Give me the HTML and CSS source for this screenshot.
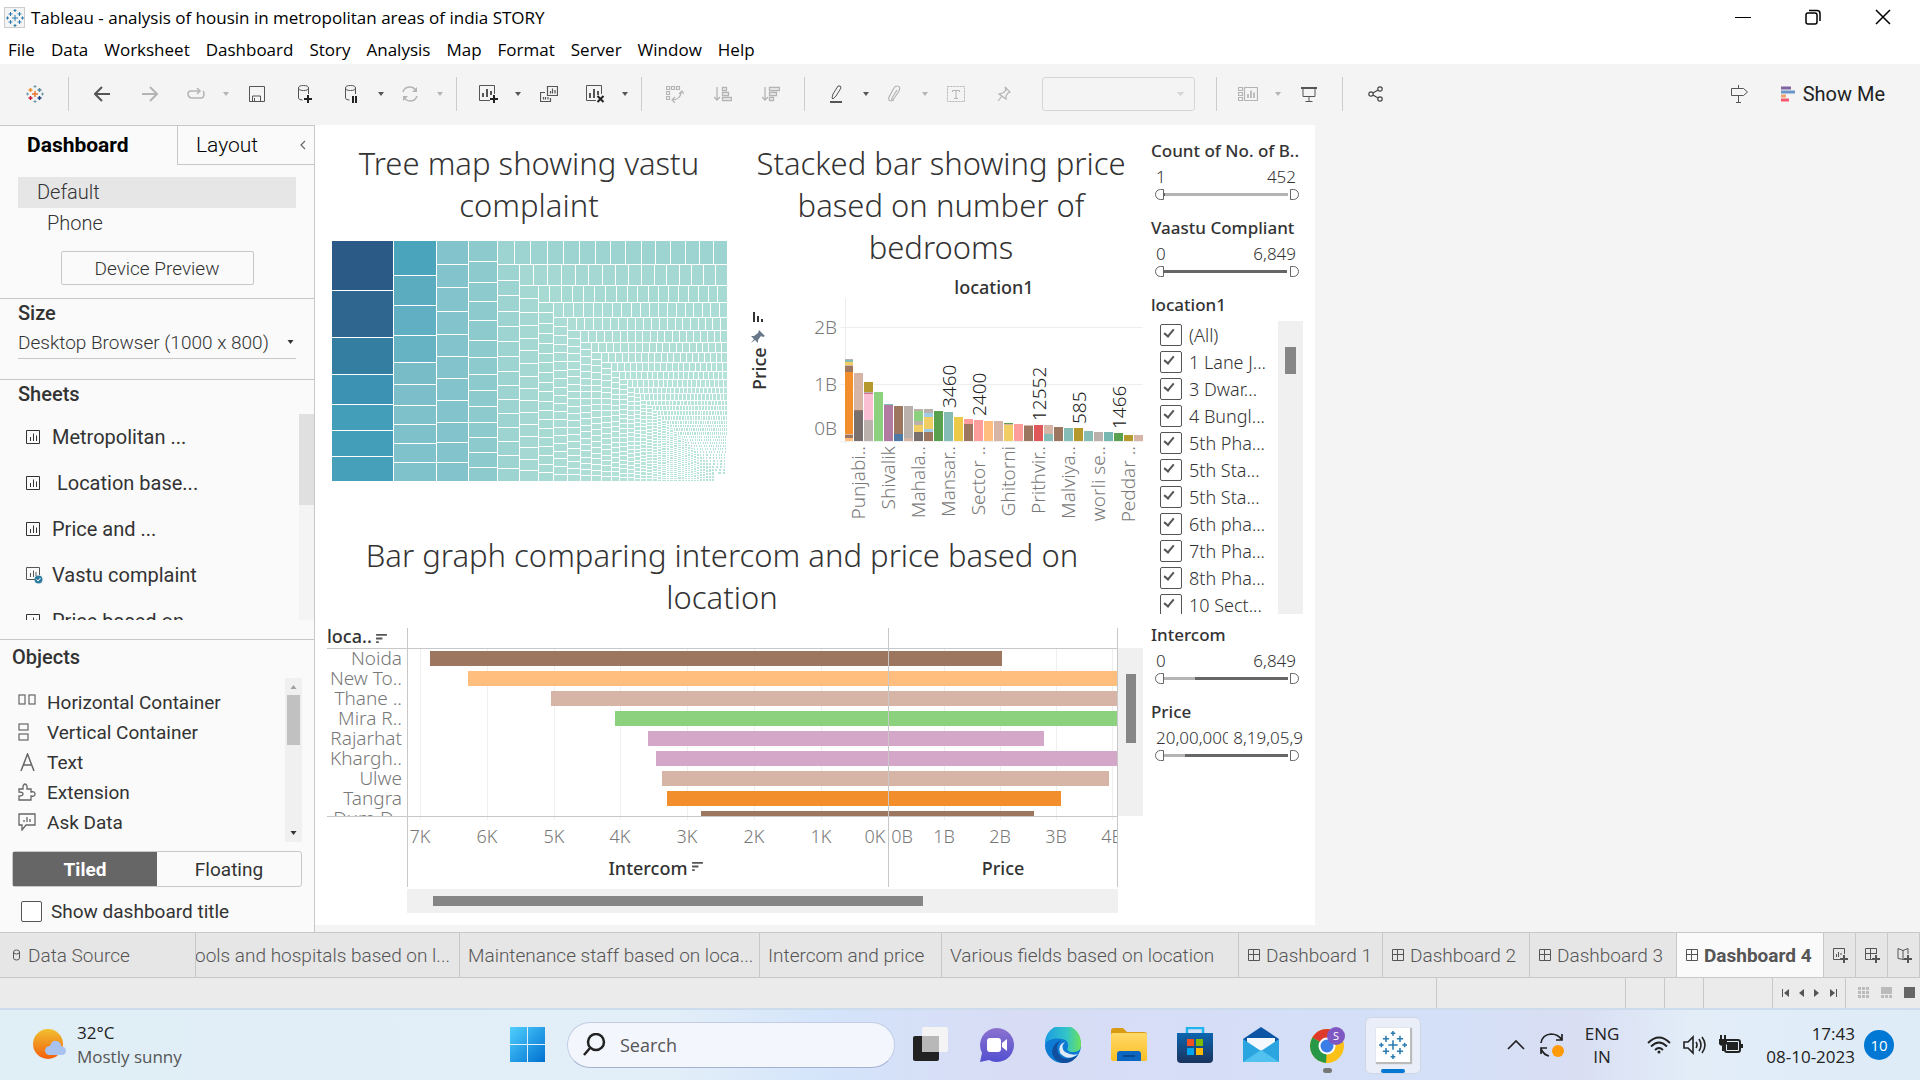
FILE: index.html
```html
<!DOCTYPE html>
<html lang="en">
<head>
<meta charset="utf-8">
<title>Tableau - analysis of housin in metropolitan areas of india STORY</title>
<link rel="stylesheet" href="styles.css">
</head>
<body>
<svg class="defs" aria-hidden="true">
  <defs>
    <symbol id="tableau" viewBox="0 0 18 18"><path d="M9 6v6M6 9h6M4.500 3v4M2.500 5h4M13.500 3v4M11.500 5h4M4.500 11v4M2.500 13h4M13.500 11v4M11.500 13h4M9 0v3M7.500 1.500h3M9 15v3M7.500 16.500h3M1.500 7.500v3M0 9h3M16.500 7.500v3M15 9h3" fill="none" stroke="currentColor"/></symbol>
    <symbol id="caret" viewBox="0 0 6 4"><path d="M0 0h6L3 4z" fill="currentColor"/></symbol>
    <symbol id="sheet" viewBox="0 0 14 14"><path d="M.5.5h13v13H.5z M4.500 7v4M7.500 3.500V11M10.500 5.500V11" fill="none" stroke="currentColor"/></symbol>
    <symbol id="sort" viewBox="0 0 12 10"><path d="M0 1h12M0 5h7M0 9h3" stroke="currentColor" stroke-width="2"/></symbol>
    <symbol id="dash" viewBox="0 0 12 12"><path d="M.5.5h11v11H.5zM.5 5.500h11M5.500.5v11" fill="none" stroke="currentColor"/></symbol>
    <linearGradient id="win" x2="1" y2="1"><stop stop-color="#4fd0ff"/><stop offset="1" stop-color="#0070d0"/></linearGradient>
    <linearGradient id="sun" x2="0" y2="1"><stop stop-color="#f0c030"/><stop offset="1" stop-color="#f2600c"/></linearGradient>
    <linearGradient id="edgeA" x2="1"><stop stop-color="#1b9de2"/><stop offset=".6" stop-color="#33c4c8"/><stop offset="1" stop-color="#6be25a"/></linearGradient>
    <linearGradient id="chat" x2="0" y2="1"><stop stop-color="#8b72cf"/><stop offset="1" stop-color="#5350d0"/></linearGradient>
    <linearGradient id="fold" x2="0" y2="1"><stop stop-color="#ffd968"/><stop offset="1" stop-color="#fbbf24"/></linearGradient>
    <linearGradient id="store" x2="0" y2="1"><stop stop-color="#0c66b0"/><stop offset="1" stop-color="#1b335c"/></linearGradient>
  </defs>
</svg>

<header class="titlebar">
  <span class="app-icon"><svg width="18" height="18"><use href="#tableau"/></svg></span>
  <span class="app-title">Tableau - analysis of housin in metropolitan areas of india STORY</span>
  <div class="win-buttons">
    <button aria-label="Minimize"><svg width="16" height="16"><path d="M0 8.500h16" stroke="#000"/></svg></button>
    <button aria-label="Restore"><svg width="16" height="16" fill="none" stroke="#000" stroke-width="1.500"><rect x="1" y="4" width="11" height="11" rx="2"/><path d="M4 1.500h8q3 0 3 3V12"/></svg></button>
    <button aria-label="Close"><svg width="16" height="16"><path d="M1 1l14 14M15 1L1 15" stroke="#000" stroke-width="1.500"/></svg></button>
  </div>
</header>

<nav class="menubar">
  <button>File</button><button>Data</button><button>Worksheet</button><button>Dashboard</button><button>Story</button><button>Analysis</button><button>Map</button><button>Format</button><button>Server</button><button>Window</button><button>Help</button>
</nav>

<div class="toolbar">
  <button class="tool" aria-label="Start page"><svg width="18" height="18" viewBox="0 0 18 18" fill="none" stroke-width="1.500"><path d="M9 6v6M6 9h6" stroke="#e8762d"/><path d="M4.500 3v4M2.500 5h4" stroke="#eb912b"/><path d="M13.500 3v4M11.500 5h4" stroke="#5b879b"/><path d="M4.500 11v4M2.500 13h4" stroke="#c72037"/><path d="M13.500 11v4M11.500 13h4" stroke="#1f447e"/><path d="M9 0v3M7.500 1.500h3M9 15v3M7.500 16.500h3M1.500 7.500v3M0 9h3M16.500 7.500v3M15 9h3" stroke="#7199a6" stroke-width="1"/></svg></button>
  <span class="sep"></span>
  <button class="tool" aria-label="Undo"><svg width="16" height="16" fill="none" stroke="#555" stroke-width="2"><path d="M16 8H2M8 1L1 8l7 7"/></svg></button>
  <button class="tool dim" aria-label="Redo"><svg width="16" height="16" fill="none" stroke="currentColor" stroke-width="2"><path d="M0 8h14M8 1l7 7-7 7"/></svg></button>
  <button class="tool narrow dim" aria-label="Replay"><svg width="18" height="12" fill="none" stroke="currentColor" stroke-width="1.500"><path d="M12 3H4Q1 3 1 6t3 4h10q3 0 3-4 0-2-1-3"/><path d="M10 0l3 3-3 3"/></svg></button>
  <button class="drop dim" aria-label="Replay options"><svg width="6" height="4"><use href="#caret"/></svg></button>
  <button class="tool" aria-label="Save"><svg width="16" height="16" fill="none" stroke="currentColor"><path d="M.5.5h15v15H.5zM3.500 15v-5h8v5M5.500 15v-3"/></svg></button>
  <button class="tool" aria-label="New data source"><svg width="16" height="18" fill="none" stroke="currentColor"><path d="M11.500 9V3M1.500 3v10q0 2 4 2"/><ellipse cx="6.500" cy="3" rx="5" ry="2.500"/><path d="M11 10v8M7 14h8" stroke="#222" stroke-width="2"/></svg></button>
  <button class="tool narrow" aria-label="Pause updates"><svg width="16" height="18" fill="none" stroke="currentColor"><path d="M12.500 9V3M2.500 3v10q0 2 4 2"/><ellipse cx="7.500" cy="3" rx="5" ry="2.500"/><path d="M10 11v7M13 11v7" stroke="#222" stroke-width="2"/></svg></button>
  <button class="drop" aria-label="Update options"><svg width="6" height="4"><use href="#caret"/></svg></button>
  <button class="tool narrow dim" aria-label="Refresh"><svg width="18" height="16" fill="none" stroke="currentColor" stroke-width="1.500"><path d="M2 6a7 7 0 0 1 13-1M16 10a7 7 0 0 1-13 1"/><path d="M16 1v5h-5zM2 15v-5h5z" fill="currentColor" stroke="none"/></svg></button>
  <button class="drop dim" aria-label="Refresh options"><svg width="6" height="4"><use href="#caret"/></svg></button>
  <span class="sep"></span>
  <button class="tool narrow" aria-label="New worksheet"><svg width="20" height="18" fill="none" stroke="currentColor"><path d="M12 15.500H1.500V.5h15V9"/><path d="M5 8v4M9 4v8M13 6v4" stroke-width="2"/><path d="M16 10v8M12 14h8" stroke="#222" stroke-width="2"/></svg></button>
  <button class="drop" aria-label="New sheet options"><svg width="6" height="4"><use href="#caret"/></svg></button>
  <button class="tool" aria-label="Duplicate"><svg width="18" height="16" fill="none" stroke="currentColor"><path d="M7.500.5h10v9h-10zM5 6.500H.5v9h10V12M10.500 5v2.500M12.500 2.500v5M15 4v3.500M3.500 11v2.500M5.500 11v2.500M8 11v2.500" stroke-width="1.200"/></svg></button>
  <button class="tool narrow" aria-label="Clear sheet"><svg width="20" height="18" fill="none" stroke="currentColor"><path d="M11 15.500H1.500V.5h15V9"/><path d="M5 8v5M9 4v9M13 6v4" stroke-width="2"/><path d="M12.500 11l6 6M18.500 11l-6 6" stroke="#222" stroke-width="2"/></svg></button>
  <button class="drop" aria-label="Clear options"><svg width="6" height="4"><use href="#caret"/></svg></button>
  <span class="sep"></span>
  <button class="tool dim" aria-label="Swap rows and columns"><svg width="18" height="18" fill="none" stroke="currentColor" stroke-width="1.200"><path d="M.5 1.500h3v3h-3zM5.500 1.500h3v3h-3zM10.500 1.500h3v3h-3zM.5 6.500h3v3h-3zM.5 11.500h3v3h-3zM6 15q8 0 9.500-8M13 9l3-3 2 3M9 12l-3 3 3 3"/></svg></button>
  <button class="tool dim" aria-label="Sort ascending"><svg width="18" height="16" fill="none" stroke="currentColor" stroke-width="1.300"><path d="M3 1v13M0 11l3 3 3-3M8.500 1.500h4v3h-4zM8.500 6.500h6v3h-6zM8.500 11.500h9v3h-9z"/></svg></button>
  <button class="tool dim" aria-label="Sort descending"><svg width="18" height="16" fill="none" stroke="currentColor" stroke-width="1.300"><path d="M3 1v13M0 11l3 3 3-3M7.500 1.500h10v3h-10zM7.500 6.500h7v3h-7zM7.500 11.500h4v3h-4z"/></svg></button>
  <span class="sep"></span>
  <button class="tool narrow" aria-label="Highlight"><svg width="12" height="18" fill="none" stroke="currentColor"><path d="M2 13l1-4 5-8q3-1 3 2L6 11l-3 3z"/><path d="M0 17h12" stroke-width="2"/></svg></button>
  <button class="drop" aria-label="Highlight options"><svg width="6" height="4"><use href="#caret"/></svg></button>
  <button class="tool narrow dim" aria-label="Group"><svg width="14" height="18" fill="none" stroke="currentColor" stroke-width="1.200"><path d="M9 5l-5 8q-1 2 1 2l6-9q2-5-2-5-2 0-3 2L1 12q-1 4 2 4l3-1"/></svg></button>
  <button class="drop dim" aria-label="Group options"><svg width="6" height="4"><use href="#caret"/></svg></button>
  <button class="tool dim" aria-label="Show mark labels"><svg width="18" height="16" fill="none" stroke="currentColor"><path d="M.5.5h17v15H.5z" stroke-dasharray="2 1"/><path d="M5.500 6V4.500h7V6M9 4.500v8M7 12.500h4"/></svg></button>
  <button class="tool dim" aria-label="Fix axes"><svg width="14" height="16" fill="none" stroke="currentColor" stroke-width="1.200"><path d="M8 1l5 5-2 1-2 3v3L2 8l4-1 3-3zM5 10l-4 5"/></svg></button>
  <select class="fit" aria-label="Fit" disabled><option></option></select>
  <span class="sep"></span>
  <button class="tool narrow dim" aria-label="Show cards"><svg width="20" height="16" fill="none" stroke="currentColor" stroke-width="1.200"><path d="M.5 1.500h4v3h-4zM.5 6.500h4v3h-4zM.5 11.500h4v3h-4zM6.500 1.500h13v13h-13z"/><path d="M10 8v4M13 4.500V12M16 6.500V12" stroke-width="1.700"/></svg></button>
  <button class="drop dim" aria-label="Card options"><svg width="6" height="4"><use href="#caret"/></svg></button>
  <button class="tool" aria-label="Presentation mode"><svg width="16" height="16" fill="none" stroke="currentColor"><path d="M0 2h16" stroke-width="2"/><path d="M2 2v8.500h12V2M8 11v4M4.500 15.500h7"/></svg></button>
  <span class="sep"></span>
  <button class="tool" aria-label="Share"><svg width="16" height="16" fill="none" stroke="#444" stroke-width="1.200"><circle cx="3" cy="8" r="2.200"/><circle cx="12" cy="3" r="2.200"/><circle cx="12" cy="13" r="2.200"/><path d="M5 7l5-3M5 9l5 3"/></svg></button>
  <div class="toolbar-right">
    <button class="tool" aria-label="Guide"><svg width="18" height="18" fill="none" stroke="currentColor"><path d="M1.500 3.500h12l4 3.500-4 3.500h-12zM8.500 0v3M8.500 11v6M6 17.500h5"/></svg></button>
    <button class="showme"><svg width="14" height="16"><path d="M0 2h10" stroke="#8064a2" stroke-width="3"/><path d="M0 6h14" stroke="#6b94c9" stroke-width="3"/><path d="M0 10h5" stroke="#f2a070" stroke-width="3"/><path d="M0 14h8" stroke="#f5586e" stroke-width="3"/></svg>Show Me</button>
  </div>
</div>

<main class="workspace">
  <aside class="side">
    <div class="side-tabs"><button class="on">Dashboard</button><button class="off">Layout<svg width="6" height="10" fill="none" stroke="#666" stroke-width="1.200"><path d="M5 1L1 5l4 4"/></svg></button></div>
    <div class="devices">
      <button class="device sel">Default</button>
      <button class="device phone">Phone</button>
      <button class="preview">Device Preview</button>
    </div>
    <section class="size">
      <h2>Size</h2>
      <button class="size-pick">Desktop Browser (1000 x 800)<svg width="7" height="4"><use href="#caret"/></svg></button>
    </section>
    <section class="sheets">
      <h2>Sheets</h2>
      <div class="sheet-box">
        <ul class="sheet-list">
          <li><svg width="14" height="14"><use href="#sheet"/></svg>Metropolitan ...</li>
          <li><svg width="14" height="14"><use href="#sheet"/></svg>&nbsp;Location base...</li>
          <li><svg width="14" height="14"><use href="#sheet"/></svg>Price and ...</li>
          <li><svg class="used" width="17" height="17" viewBox="0 0 17 17"><path d="M9 12.500H.5V.5h13V8M4.500 6v4M7.500 3.500V10M10 5v4" fill="none" stroke="#555"/><circle cx="12.500" cy="12.500" r="4" fill="#2f7ea1"/><path d="M10.500 12.500l1.500 1.500 2.500-3" fill="none" stroke="#fff"/></svg>Vastu complaint</li>
          <li><svg width="14" height="14"><use href="#sheet"/></svg>Price based on</li>
        </ul>
        <div class="sheet-scroll"></div>
      </div>
    </section>
    <section class="objects">
      <h2>Objects</h2>
      <div class="object-box">
        <ul class="object-list">
          <li><svg width="18" height="18" fill="none" stroke="currentColor" stroke-width="1.200"><rect x="1" y="2" width="6" height="9"/><rect x="11" y="2" width="6" height="9"/></svg>Horizontal Container</li>
          <li><svg width="18" height="18" fill="none" stroke="currentColor" stroke-width="1.200"><rect x="1" y="1" width="9" height="6"/><rect x="1" y="11" width="9" height="6"/></svg>Vertical Container</li>
          <li><svg width="18" height="18" fill="none" stroke="currentColor" stroke-width="1.500"><path d="M3 18L9.500 1 16 18M5 12h9"/></svg>Text</li>
          <li><svg width="18" height="18" fill="none" stroke="currentColor" stroke-width="1.300"><path d="M1 6h4V3q2-4 4 0v3h4v3q4-1 4 2t-4 2v4H1v-4q4 0 4-2T1 9z"/></svg>Extension</li>
          <li><svg width="18" height="18" fill="none" stroke="currentColor" stroke-width="1.300"><path d="M1 1h16v11H8l-4 5v-5H1zM6 7v2M9 4v5M12 6v3"/></svg>Ask Data</li>
        </ul>
        <div class="object-scroll"><svg width="7" height="4" class="up"><use href="#caret"/></svg><i></i><svg width="7" height="4" class="down"><use href="#caret"/></svg></div>
      </div>
      <div class="mode"><button class="on">Tiled</button><button>Floating</button></div>
      <label class="show-title"><input type="checkbox">Show dashboard title</label>
    </section>
  </aside>

  <div class="dashboard">
    <section class="tree">
      <h1>Tree map showing vastu complaint</h1>
      <svg id="treemap" width="395" height="241" shape-rendering="crispEdges"></svg>
    </section>
    <section class="stack">
      <h1>Stacked bar showing price based on number of bedrooms</h1>
      <svg id="stacked" width="408" height="264">
        <text class="bold" x="259" y="26" text-anchor="middle">location1</text>
        <path d="M110.500 30v146M105 59.500h303M105 116.500h303M105 173.500h303" stroke="#eeeeee"/>
        <path d="M19 44v10M23 48v6M27 51v3" stroke="#333" stroke-width="2"/>
        <path d="M24 62l6 6-2 1-2-1-3 4 0 3-3-3-4 3 3-4-3-3 3 0 4-3z" fill="#66788a"/>
        <text class="bold" transform="translate(31 122) rotate(-90)">Price</text>
        <g class="axis" text-anchor="end"><text x="102" y="66">2B</text><text x="102" y="123">1B</text><text x="102" y="167">0B</text></g>
        <g id="bars" shape-rendering="crispEdges"></g>
        <g id="names" class="axis" text-anchor="end"></g>
        <g id="values" class="mark"></g>
      </svg>
    </section>
    <aside class="filters">
      <div class="filter"><h3>Count of No. of B..</h3><div class="range"><span>1</span><span>452</span></div><div class="slider low"><input type="range" value="0" aria-label="Minimum count"><input type="range" value="100" class="max" aria-label="Maximum count"></div></div>
      <div class="filter"><h3>Vaastu Compliant</h3><div class="range"><span>0</span><span>6,849</span></div><div class="slider"><input type="range" value="0" aria-label="Minimum vaastu"><input type="range" value="100" class="max" aria-label="Maximum vaastu"></div></div>
      <div class="locations">
        <h3>location1</h3>
        <div class="loc-box">
          <div class="loc-list">
            <label><input type="checkbox" checked>(All)</label>
            <label><input type="checkbox" checked>1 Lane J...</label>
            <label><input type="checkbox" checked>3 Dwar...</label>
            <label><input type="checkbox" checked>4 Bungl...</label>
            <label><input type="checkbox" checked>5th Pha...</label>
            <label><input type="checkbox" checked>5th Sta...</label>
            <label><input type="checkbox" checked>5th Sta...</label>
            <label><input type="checkbox" checked>6th pha...</label>
            <label><input type="checkbox" checked>7th Pha...</label>
            <label><input type="checkbox" checked>8th Pha...</label>
            <label><input type="checkbox" checked>10 Sect...</label>
          </div>
          <div class="loc-scroll"></div>
        </div>
      </div>
      <div class="filter"><h3>Intercom</h3><div class="range"><span>0</span><span>6,849</span></div><div class="slider part"><input type="range" value="0" aria-label="Minimum intercom"><input type="range" value="100" class="max" aria-label="Maximum intercom"></div></div>
      <div class="filter"><h3>Price</h3><div class="range tight"><span>20,00,000</span><span>8,19,05,9</span></div><div class="slider small"><input type="range" value="0" aria-label="Minimum price"><input type="range" value="100" class="max" aria-label="Maximum price"></div></div>
    </aside>
    <section class="compare">
      <h1>Bar graph comparing intercom and price based on location</h1>
      <div class="compare-body">
        <svg width="791" height="261">
          <clipPath id="rows"><rect width="791" height="188"/></clipPath>
          <clipPath id="all"><rect width="790" height="261"/></clipPath>
          <text class="bold" x="0" y="15">loca..</text>
          <svg x="49" y="6" width="11" height="9" color="#555"><use href="#sort"/></svg>
          <path d="M93.500 21v171M160.500 21v171M227.500 21v171M293.500 21v171M360.500 21v171M427.500 21v171M494.500 21v171M617.500 21v171M673.500 21v171M729.500 21v171M785.500 21v171" stroke="#efefef"/>
          <g id="compare-bars" shape-rendering="crispEdges" clip-path="url(#rows)"></g>
          <g id="compare-names" class="axis" text-anchor="end" clip-path="url(#rows)"></g>
          <path d="M0 20.500h791M0 188.500h791M80.500 0v259M561.500 0v259M790.500 0v259" stroke="#c8c8c8"/>
          <g class="axis ticks" text-anchor="middle" clip-path="url(#all)">
            <text x="93" y="215">7K</text><text x="160" y="215">6K</text><text x="227" y="215">5K</text><text x="293" y="215">4K</text><text x="360" y="215">3K</text><text x="427" y="215">2K</text><text x="494" y="215">1K</text><text x="548" y="215">0K</text><text x="575" y="215">0B</text><text x="617" y="215">1B</text><text x="673" y="215">2B</text><text x="729" y="215">3B</text><text x="785" y="215">4B</text>
          </g>
          <text class="bold" x="321" y="247" text-anchor="middle">Intercom</text>
          <svg x="365" y="234" width="11" height="9" color="#555"><use href="#sort"/></svg>
          <text class="bold" x="676" y="247" text-anchor="middle">Price</text>
        </svg>
        <div class="v-scroll"></div>
        <div class="h-scroll"></div>
      </div>
    </section>
  </div>
</main>

<nav class="sheet-tabs">
  <button class="t-source"><svg width="10" height="12" fill="none" stroke="currentColor"><path d="M1.500 3v6q0 2 3 2t3-2V3"/><ellipse cx="4.500" cy="3" rx="3" ry="2"/></svg>Data Source</button>
  <button class="t-hosp"><span>hools and hospitals based on l...</span></button>
  <button class="t-staff">Maintenance staff based on loca...</button>
  <button class="t-inter">Intercom and price</button>
  <button class="t-fields">Various fields based on location</button>
  <button class="t-dash first"><svg width="12" height="12"><use href="#dash"/></svg>Dashboard 1</button>
  <button class="t-dash"><svg width="12" height="12"><use href="#dash"/></svg>Dashboard 2</button>
  <button class="t-dash"><svg width="12" height="12"><use href="#dash"/></svg>Dashboard 3</button>
  <button class="t-dash active"><svg width="12" height="12"><use href="#dash"/></svg>Dashboard 4</button>
  <button class="t-new" aria-label="New worksheet"><svg width="16" height="16" fill="none" stroke="#555"><path d="M8 12.500H1.500v-11h11V7M4.500 7v3M6.500 5v5M9 6v2"/><path d="M12 8v8M8 12h8" stroke-width="2"/></svg></button>
  <button class="t-new" aria-label="New dashboard"><svg width="16" height="16" fill="none" stroke="#555"><path d="M8 12.500H1.500v-11h11V7M1.500 6.500h11M6.500 1v11"/><path d="M12 8v8M8 12h8" stroke-width="2"/></svg></button>
  <button class="t-new" aria-label="New story"><svg width="16" height="16" fill="none" stroke="#555"><path d="M8 12.500l-6-1v-10l5 2 5-2V7M7 3.500v9"/><path d="M12 8v8M8 12h8" stroke-width="2"/></svg></button>
</nav>

<div class="status">
  <span class="s1"></span><span class="s2"></span><span class="s2"></span><span class="s2"></span><span class="s3"></span>
  <span class="s4"><svg width="55" height="8" fill="#555"><path d="M0 0h1v8H0zM7 0v8L2 4zM22 0v8l-5-4zM32 0v8l5-4zM48 0v8l5-4zM54 0h1v8h-1z"/></svg></span>
  <span class="s5"><svg width="60" height="12"><path d="M0 0h3v3H0zM4 0h3v3H4zM8 0h3v3H8zM0 4h3v3H0zM4 4h3v3H4zM8 4h3v3H8zM0 8h3v3H0zM4 8h3v3H4zM8 8h3v3H8zM23 0h11v7H23zM23 8h3v3h-3zM27 8h3v3h-3zM31 8h3v3h-3z" fill="#bbb"/><path d="M46 0h11v11H46z" fill="#666"/></svg></span>
</div>

<footer class="taskbar">
  <div class="weather">
    <svg width="34" height="34"><circle cx="15" cy="16" r="15" fill="url(#sun)"/><path d="M17 27q-5 0-5-5 1-4 5-4 2-6 7-5 4 1 4 5 5 1 5 5 0 4-5 4z" fill="#a9c3f0"/></svg>
    <div><b>32°C</b><span>Mostly sunny</span></div>
  </div>
  <div class="apps">
    <button class="app" aria-label="Start"><svg width="36" height="36"><path d="M0 0h17v17H0zM18 0h17v17H18zM0 18h17v17H0zM18 18h17v17H18z" fill="url(#win)"/></svg></button>
    <label class="search"><svg width="24" height="24" fill="none" stroke="#222" stroke-width="2.500"><circle cx="14" cy="9" r="8"/><path d="M8 15l-6 7"/></svg><input type="text" placeholder="Search"></label>
    <button class="app" aria-label="Task view"><svg width="36" height="36"><rect x="0" y="9" width="26" height="25" rx="2" fill="#222"/><rect x="9" y="0" width="26" height="25" rx="2" fill="#f4f4f4"/><path d="M9 9h17v16H9z" fill="#b8b8b8"/></svg></button>
    <button class="app" aria-label="Chat"><svg width="36" height="36"><path d="M18 1a17 17 0 1 1-8 32l-9 2 2-9A17 17 0 0 1 18 1z" fill="url(#chat)"/><rect x="8" y="11" width="14" height="14" rx="3" fill="#fff"/><path d="M23 16l5-4v12l-5-4z" fill="#fff"/></svg></button>
    <button class="app" aria-label="Edge"><svg width="36" height="36"><circle cx="18" cy="18" r="18" fill="#0d7bd4"/><path d="M0 16A18 18 0 0 1 36 16q1 10-10 9-5-1-3-5 1-7-6-8Q7 10 0 16z" fill="url(#edgeA)"/><path d="M17 13q-7 4-4 13 6 10 20 2-6 9-16 8-10-3-10-12 2-9 10-11z" fill="#0f4f9e"/><path d="M20 15q-5 5 0 10 7 4 13 2-10 8-18-1-3-8 5-11z" fill="#dfeaf8"/></svg></button>
    <button class="app" aria-label="File Explorer"><svg width="36" height="36"><path d="M0 4q0-3 3-3h9l4 4h17q3 0 3 3v4H0z" fill="#d89b12"/><rect y="6" width="36" height="28" rx="2" fill="url(#fold)"/><path d="M6 34v-7q0-3 3-3h18q3 0 3 3v7z" fill="#0a66c0"/><path d="M12 29h12" stroke="#08488c" stroke-width="2"/></svg></button>
    <button class="app" aria-label="Store"><svg width="36" height="36"><path d="M10 8V1h16v7" fill="none" stroke="#20b4ec" stroke-width="2.500"/><path d="M0 6h36v26q0 4-4 4H4q-4 0-4-4z" fill="url(#store)"/><path d="M10 12h7v7h-7z" fill="#f25022"/><path d="M19 12h7v7h-7z" fill="#7fba00"/><path d="M10 21h7v7h-7z" fill="#00a4ef"/><path d="M19 21h7v7h-7z" fill="#ffb900"/></svg></button>
    <button class="app" aria-label="Mail"><svg width="36" height="36"><path d="M0 12L18 0l18 12v22H0z" fill="#0b55a4"/><path d="M4 11h28v14H4z" fill="#f5f8fc"/><path d="M0 12l18 12 18-12v23H0z" fill="#2ba5e0"/><path d="M0 35l18-12 18 12z" fill="#51c2f0"/></svg></button>
    <button class="app run" aria-label="Chrome"><svg width="36" height="36"><circle cx="18" cy="19" r="17" fill="#fbc116"/><path d="M18 19L3.300 10.500A17 17 0 0 1 32.700 10.500z" fill="#dd3a2c"/><path d="M3.300 10.500L18 19l-1 17A17 17 0 0 1 3.300 10.500z" fill="#279847"/><circle cx="18" cy="19" r="8.500" fill="#fff"/><circle cx="18" cy="19" r="6.500" fill="#3b7de8"/><circle cx="27" cy="9" r="9" fill="#7e57c2"/><text x="27" y="13" text-anchor="middle" font-size="11" fill="#fff">S</text></svg></button>
    <button class="app current" aria-label="Tableau"><span><svg width="28" height="28"><use href="#tableau"/></svg></span></button>
  </div>
  <div class="tray">
    <svg class="t1" width="18" height="10" fill="none" stroke="#222" stroke-width="1.700"><path d="M1 9l8-8 8 8"/></svg>
    <svg class="t2" width="26" height="26" fill="none" stroke="#222" stroke-width="1.700"><path d="M2 11Q3 3 12 2q7 0 11 6M23 2v6h-6M2 22v-6h6M2 17q3 6 8 7"/><circle cx="19" cy="19" r="6" fill="#ff9a0a" stroke="none"/></svg>
    <div class="lang">ENG<br>IN</div>
    <svg class="t3" width="24" height="18" fill="none" stroke="#222" stroke-width="1.800"><path d="M1 7q11-11 22 0M4 10.500q8-8 16 0M8 14q4-4 8 0"/><circle cx="12" cy="16" r="1.500" fill="#222" stroke="none"/></svg>
    <svg class="t4" width="24" height="20" fill="none" stroke="#222" stroke-width="1.600"><path d="M1 7h4l5-5v16l-5-5H1zM13 7q2 3 0 6M16 4q4 6 0 12M19 2q6 8 0 16"/></svg>
    <svg class="t5" width="24" height="20"><rect x="6" y="5" width="15" height="12" rx="2" fill="none" stroke="#222" stroke-width="2"/><path d="M8 7h11v8H8zM22 9h2v4h-2zM0 4h8v5q-1 2-4 2T0 9zM1 0h2v4H1zM5 0h2v4H5zM3 10h2v6H3z" fill="#222"/></svg>
    <div class="clock">17:43<br>08-10-2023</div>
    <span class="badge">10</span>
  </div>
</footer>
<script src="script.js"></script>
</body>
</html>
```
FILE: styles.css
```css
* { box-sizing: border-box; }
body {
  margin: 0;
  min-height: 100vh;
  display: flex;
  flex-direction: column;
  font-family: Roboto, "Liberation Sans", sans-serif;
  font-size: 19px;
  color: #333;
  background: #f4f4f4;
  overflow: hidden;
}
button, input, select { font: inherit; color: inherit; }
button { border: 0; padding: 0; background: none; white-space: nowrap; text-align: left; }
h1, h2, h3, ul { margin: 0; padding: 0; font-weight: 400; list-style: none; }
svg { display: block; flex: none; }
.defs { position: absolute; width: 0; height: 0; }

.titlebar { display: flex; align-items: center; height: 34px; padding-left: 4px; background: #fff; font: 17px "Open Sans", sans-serif; color: #000; }
.app-icon { width: 21px; height: 21px; margin-right: 6px; padding: 1px; background: #f4f4f4; border: 1px solid #ccc; color: #2c7bb0; }
.win-buttons { display: flex; margin-left: auto; padding-right: 2px; }
.win-buttons button { width: 70px; height: 34px; display: flex; align-items: center; justify-content: center; }
.menubar { display: flex; gap: 16px; height: 30px; align-items: center; padding: 1px 8px 0; background: #fff; font: 17px "Open Sans", sans-serif; color: #000; }

.toolbar { display: flex; align-items: center; height: 61px; padding: 0 0 2px 11px; background: #f4f4f4; color: #555; }
.tool { width: 48px; height: 34px; display: flex; align-items: center; justify-content: center; }
.tool.narrow { width: 44px; }
.drop { width: 15px; height: 34px; display: flex; align-items: center; justify-content: center; }
.dim { color: #b4b4b4; }
.sep { width: 19px; height: 34px; background: linear-gradient(#ccc, #ccc) center / 1px 100% no-repeat; }
.fit { width: 153px; height: 34px; margin: 0 12px 0 14px; border: 1px solid #ccc; border-radius: 3px; appearance: none; background: conic-gradient(from -45deg at 50% 100%, #ccc 90deg, transparent 0) right 10px center / 8px 4px no-repeat; }
.toolbar-right { display: flex; align-items: center; margin-left: auto; padding-right: 35px; gap: 18px; }
.showme { display: flex; align-items: center; gap: 8px; font-size: 20px; color: #222; }

.workspace { flex: 1; display: flex; min-height: 0; }
.side { width: 315px; display: flex; flex-direction: column; background: #fafafa; border-right: 1px solid #c8c8c8; border-top: 1px solid #c8c8c8; font-weight: 300; }
.side h2 { font-weight: 500; font-size: 20px; line-height: 26px; color: #333; }
.side-tabs { display: flex; height: 39px; font-size: 21px; color: #000; }
.side-tabs .on { width: 177px; padding: 0 0 2px 27px; font-weight: 700; }
.side-tabs .off { flex: 1; display: flex; align-items: center; justify-content: space-between; padding: 0 8px 0 18px; border-left: 1px solid #c8c8c8; border-bottom: 1px solid #c8c8c8; }
.devices { display: flex; flex-direction: column; height: 134px; padding: 12px 18px 0; font-size: 20px; border-bottom: 1px solid #c8c8c8; }
.device { height: 31px; padding: 0 0 2px 19px; }
.sel { background: #e6e6e6; }
.phone { padding-left: 29px; }
.preview { align-self: center; width: 193px; height: 34px; margin-top: 12px; border: 1px solid #c8c8c8; border-radius: 2px; text-align: center; font-size: 19px; }
.size { height: 81px; padding: 1px 18px 0; border-bottom: 1px solid #c8c8c8; }
.size-pick { display: flex; align-items: center; justify-content: space-between; width: 278px; height: 33px; border-bottom: 1px solid #c8c8c8; padding-right: 2px; }
.sheets { height: 260px; padding-left: 18px; border-bottom: 1px solid #c8c8c8; }
.sheets h2 { padding-top: 1px; }
.sheet-box { display: flex; justify-content: space-between; height: 206px; margin-top: 7px; overflow: hidden; }
.sheet-list { font-size: 20px; }
.sheet-list li { display: flex; align-items: center; gap: 12px; height: 46px; padding-left: 8px; white-space: nowrap; color: #333; }
.sheet-list .used { margin-right: -3px; }
.sheet-scroll { width: 15px; background: linear-gradient(#e0e0e0, #e0e0e0) 0 0 / 15px 91px no-repeat #f4f4f4; }
.objects { padding: 4px 12px 0; font-weight: 400; }
.object-box { display: flex; justify-content: space-between; height: 164px; margin-top: 8px; }
.object-list { padding: 9px 0 0 6px; }
.object-list li { display: flex; align-items: center; gap: 11px; height: 30px; }
.object-list svg { color: #666; }
.object-scroll { width: 17px; display: flex; flex-direction: column; align-items: center; background: #f0f0f0; padding: 7px 0; }
.object-scroll i { width: 13px; height: 50px; margin-top: 6px; background: #c1c1c1; }
.object-scroll .up { transform: rotate(180deg); color: #a0a0a0; }
.object-scroll .down { margin-top: auto; }
.mode { display: flex; height: 36px; margin-top: 9px; border: 1px solid #c8c8c8; border-radius: 3px; }
.mode button { flex: 1; text-align: center; }
.mode .on { background: #666; color: #fff; font-weight: 700; }
.show-title { display: flex; align-items: center; gap: 9px; margin-top: 13px; padding-left: 9px; }
.show-title input { appearance: none; width: 21px; height: 21px; margin: 0; border: 1px solid #555; border-radius: 2px; background: #fff; }

.dashboard { width: 1000px; height: 800px; display: grid; grid-template: 392px 1fr / 412px 408px 1fr; padding: 17px 12px 0 8px; background: #fff; font-family: "Noto Sans", sans-serif; font-weight: 300; }
.dashboard h1 { font-size: 31px; line-height: 42px; font-weight: 300; text-align: center; }
.tree svg { margin: 15px 0 0 9px; }
.tree h1 { padding: 0 20px; }
.stack h1 { padding-left: 4px; }
.bold { font-size: 18px; font-weight: 500; fill: #333; }
.axis { font-size: 19px; fill: #787878; }
.ticks { font-size: 18px; }
.mark { font-size: 19px; fill: #222; }
.compare { grid-column: 1 / 3; }
.compare h1 { padding: 0 58px 0 36px; }
.compare-body { display: grid; grid-template-columns: 791px 25px; padding-left: 4px; margin-top: 10px; }
.v-scroll { height: 168px; margin-top: 20px; background: linear-gradient(#868686, #868686) 8px 26px / 10px 69px no-repeat #f0f0f0; }
.h-scroll { height: 24px; margin-left: 80px; background: linear-gradient(#868686, #868686) 26px 7px / 490px 10px no-repeat #f0f0f0; }
.filters { grid-row: 1 / 3; grid-column: 3; margin-top: -3px; padding: 0 0 0 8px; min-width: 0; }
.filters h3 { font-size: 17px; font-weight: 500; line-height: 24px; white-space: nowrap; }
.filter { height: 77px; }
.range { display: flex; justify-content: space-between; padding: 0 7px 0 5px; font-size: 17px; line-height: 24px; margin-top: 2px; }
.range.tight { padding-right: 0; white-space: nowrap; }
.tight span { width: 72px; overflow: hidden; }
.tight span + span { width: auto; }
.slider { position: relative; height: 10px; margin: 0 4px; background: linear-gradient(#666, #666) 4px 4px / 128px 3px no-repeat; }
.low { background: linear-gradient(90deg, #666 2px, #b4b4b4 2px) 8px 4px / 125px 3px no-repeat; }
.part { background: linear-gradient(90deg, #b4b4b4 32px, #666 32px) 8px 4px / 125px 3px no-repeat; }
.small { background: linear-gradient(90deg, #b4b4b4 22px, #666 22px) 8px 4px / 125px 3px no-repeat; }
.slider input { position: absolute; inset: 0; width: 100%; height: 10px; margin: 0; appearance: none; background: none; pointer-events: none; }
.slider input::-webkit-slider-thumb { appearance: none; pointer-events: auto; width: 9px; height: 11px; border: 1px solid #666; border-radius: 6px 0 0 6px; background: #fff; }
.slider .max::-webkit-slider-thumb { border-radius: 0 6px 6px 0; }
.locations { height: 330px; }
.loc-box { display: flex; justify-content: space-between; height: 293px; margin-top: 4px; overflow: hidden; }
.loc-list label { display: flex; align-items: center; gap: 7px; height: 27px; padding-left: 9px; font-size: 18px; white-space: nowrap; }
.loc-list input { appearance: none; width: 22px; height: 22px; margin: 0; border: 1px solid #555; border-radius: 2px; background: #fff; }
.loc-list input::before { content: ""; display: block; width: 4px; height: 8px; margin: 2px 0 0 5px; border: solid #555; border-width: 0 2px 2px 0; transform: rotate(40deg); }
.loc-scroll { width: 25px; background: linear-gradient(#868686, #868686) 7px 26px / 11px 27px no-repeat #f0f0f0; }

.sheet-tabs { display: flex; height: 46px; background: #e6e6e6; border-top: 1px solid #c8c8c8; border-bottom: 1px solid #c8c8c8; color: #555; font-weight: 300; }
.sheet-tabs button { display: flex; align-items: center; gap: 6px; padding-left: 8px; border-right: 1px solid #c8c8c8; overflow: hidden; }
.sheet-tabs .t-source { width: 196px; padding-left: 12px; }
.sheet-tabs .t-hosp { width: 264px; justify-content: flex-end; padding: 0 9px 0 0; }
.t-staff { width: 300px; }
.t-inter { width: 182px; }
.t-fields { width: 297px; }
.sheet-tabs .t-dash { width: 147px; padding-left: 9px; }
.sheet-tabs .first { width: 144px; }
.sheet-tabs .active { background: #fafafa; font-weight: 700; }
.sheet-tabs .t-new { flex: 1; padding: 0; justify-content: center; }
.status { display: flex; height: 30px; background: #ebebeb; }
.status span { border-right: 1px solid #c8c8c8; display: flex; align-items: center; }
.s1 { flex: 1; }
.s2 { width: 39px; }
.s1 + .s2 { width: 189px; }
.s3 { width: 69px; }
.s4 { width: 73px; justify-content: center; }
.status .s5 { width: 74px; padding-left: 12px; border: 0; }

.taskbar { display: flex; align-items: center; height: 72px; background: linear-gradient(90deg, #e0eef6, #e2eef8 35%, #d4e4fa 43%, #d8dcf5 53%, #d3e0f8 75%, #d9def3 82%, #e2edf8 88%, #deecf8); border-top: 2px solid #cddcec; font: 17px "Open Sans", sans-serif; color: #222; }
.weather { display: flex; gap: 10px; width: 495px; padding-left: 33px; align-items: center; line-height: 24px; }
.weather b, .weather span { display: block; font-weight: 400; }
.weather span { color: #555; }
.apps { display: flex; align-items: center; }
.app { width: 66px; height: 58px; display: flex; align-items: center; justify-content: center; position: relative; }
.search { width: 328px; height: 46px; margin: 0 3px 0 6px; display: flex; align-items: center; gap: 12px; padding-left: 14px; border-radius: 23px; background: #f3f6fd; border: 1px solid #c2cde4; border-bottom-color: #a5b2cf; }
.search input { width: 200px; border: 0; background: none; outline: 0; font-size: 18px; }
.search input::placeholder { color: #555; opacity: 1; }
.run::after { content: ""; position: absolute; bottom: 1px; width: 9px; height: 5px; border-radius: 3px; background: #777; }
.current span { width: 56px; height: 57px; border-radius: 6px; background: #eaeef8; border: 1px solid #d0d6e6; display: flex; align-items: center; justify-content: center; color: #2c7bb0; }
.current svg { background: #fff; box-shadow: 0 0 0 3px #fff, 1px 1px 1px 4px #bbb; }
.current::after { content: ""; position: absolute; bottom: 1px; width: 24px; height: 4px; border-radius: 2px; background: #0078d4; }
.tray { display: flex; align-items: center; margin-left: auto; padding-right: 26px; line-height: 23px; }
.t1 { margin-right: 14px; }
.t2 { margin-right: 20px; }
.lang { text-align: center; margin-right: 28px; }
.t3, .t4 { margin-right: 12px; }
.t5 { margin-right: 23px; }
.clock { text-align: right; margin-right: 9px; }
.badge { width: 30px; height: 30px; border-radius: 50%; background: #0078d4; color: #fff; font-size: 15px; line-height: 30px; text-align: center; }
```
FILE: script.js
```js
const NS = "http://www.w3.org/2000/svg";
function rect(parent, x, y, w, h, fill) {
  const r = document.createElementNS(NS, "rect");
  r.setAttribute("x", x); r.setAttribute("y", y);
  r.setAttribute("width", w); r.setAttribute("height", h);
  r.setAttribute("fill", fill);
  parent.appendChild(r);
}
function label(parent, x, y, text, turned) {
  const t = document.createElementNS(NS, "text");
  if (turned) t.setAttribute("transform", `translate(${x} ${y}) rotate(-90)`);
  else { t.setAttribute("x", x); t.setAttribute("y", y); }
  t.textContent = text;
  parent.appendChild(t);
}
function mix(a, b, t) {
  const c = a.map((v, i) => Math.round(v + (b[i] - v) * t));
  return `rgb(${c[0]},${c[1]},${c[2]})`;
}

/* Tree map: alternating columns and rows, cells shrinking toward the corner */
const tree = document.getElementById("treemap");
const W = 396, H = 241;
const columns = [
  [0, 62, [0, 50, 97, 134, 164, 190, 216, 241], ["#2b5a87", "#2e668f", "#347ea1", "#3c92b2", "#439eb9", "#439eb9", "#46a0ba"]],
  [62, 105, [0, 35, 65, 95, 122, 144, 165, 184, 203, 222, 241], ["#4aa4bb", "#5bacbf", "#60afc2", "#66b3c3", "#78bcc8", "#7cbfca", "#7fc1ca", "#7fc1cb", "#80c2cb", "#80c2cb"]],
  [105, 137, [0, 24, 47, 71, 94, 116, 138, 160, 182, 202, 222, 241], ["#82c3cc"]],
  [137, 166, [0, 21, 42, 61, 80, 100, 117, 134, 150, 166, 182, 197, 212, 227, 241], ["#8ccacd"]]
];
columns.forEach(([x0, x1, cuts, colors]) => {
  for (let i = 0; i < cuts.length - 1; i++)
    rect(tree, x0, cuts[i], x1 - x0 - 1, cuts[i + 1] - cuts[i] - 1, colors[Math.min(i, colors.length - 1)]);
});
const rowCuts = [24, 45, 62, 77, 90, 102, 112, 122, 131, 139, 147, 153, 160, 165, 170, 175, 180, 184, 187, 191, 195, 198, 201, 204, 207, 210, 213, 216, 219, 222, 225, 228, 231, 234];
const colCuts = [188, 207, 222, 236, 249, 260, 270, 280, 288, 296, 303, 309, 315, 321, 326, 330, 335, 338, 342, 346, 350, 353, 356, 359, 362, 365, 368, 371, 374, 377, 380, 383, 386, 389];
const counts = [15, 16, 18, 19, 20, 20, 20, 20, 20, 21, 21, 22, 22, 23, 24, 24, 25, 25, 25, 24, 23, 22, 19, 17, 15, 13, 11, 9, 8, 6, 5, 4, 3, 2];
function cuts(from, to, n) {
  const out = [];
  for (let i = 0; i <= n; i++) {
    const t = i / n;
    out.push(Math.round(from + (to - from) * (t * 1.1 - t * t * 0.1)));
  }
  return out;
}
let left = 166, top0 = 0;
const light = [185, 228, 217], start = [157, 211, 208];
rowCuts.forEach((bottom, k) => {
  const color = mix(start, light, Math.min(1, Math.sqrt(k / 12)));
  const late = k > 20;
  const xs = cuts(left, late ? W - 1 : W, counts[k]);
  for (let i = 0; i < counts[k]; i++)
    rect(tree, xs[i], top0, Math.max(1, xs[i + 1] - xs[i] - (late ? 2 : 1)), bottom - top0 - 1, color);
  const right = colCuts[k];
  const n = k < 2 ? counts[k] : counts[k] + (k < 18 ? 1 : 0);
  const ys = cuts(bottom, H, n);
  for (let i = 0; i < n; i++)
    if (right < 385 || ys[i] < 230)
      rect(tree, left, ys[i], right - left - 1, Math.max(1, ys[i + 1] - ys[i] - 1), color);
  left = right; top0 = bottom;
});

/* Stacked bars, segments listed from the baseline up */
const O = "#f28e2b", BR = "#9d7660", TAN = "#d7b5a6", GY = "#bab0ac", DG = "#79706e", LO = "#ffbe7d", YE = "#f1ce63", TE = "#86bcb6", PK = "#ff9d9a", OL = "#b6992d", GR = "#59a14f", LG = "#8cd17d", LB = "#a0cbe8";
const stacks = [
  [[LO, 3], [BR, 3], [TAN, 1], [O, 62], [BR, 6], [TAN, 1], [YE, 3], [TE, 2], [GY, 1]],
  [[DG, 30], [BR, 1], [TAN, 37]], [[GY, 21], ["#fabfd2", 26], ["#d37295", 1], [GY, 1], [OL, 10]],
  [[LG, 49]], [["#b07aa1", 36], [TE, 1]], [["#4e79a7", 7], [BR, 28]], [[TAN, 3], [GY, 32]],
  [[DG, 9], [YE, 7], [GY, 4], [LG, 10], [GY, 2]], [[BR, 9], [LB, 3], [YE, 12], [LB, 4], [GY, 4]],
  [[GR, 30]], [[TE, 29]], [["#edc948", 24]], [[BR, 17], [PK, 5]], [[PK, 21]], [[LO, 20]], [[TAN, 20]],
  [[YE, 16], [TAN, 1], [GR, 1]], [[PK, 17]], [[BR, 15], [TAN, 1]], [["#e15759", 16]], [[TE, 7], [TAN, 9]],
  [[BR, 14]], [[TE, 13]], [[OL, 13]], [[TE, 10]], [[GY, 9]], [["#76b7b2", 9]], [[GR, 8]], [[OL, 6]], [[TAN, 6]]
];
const bars = document.getElementById("bars");
stacks.forEach((segments, i) => {
  let y = 173;
  segments.forEach(([color, h]) => { y -= h; rect(bars, i ? 109 + i * 10 : 110, y, i ? 9 : 8, h, color); });
});
["Punjabi..", "Shivalik", "Mahala..", "Mansar..", "Sector ..", "Ghitorni", "Prithvir..", "Malviya..", "worli se..", "Peddar .."]
  .forEach((name, i) => label(document.getElementById("names"), 130 + i * 30, 178, name, true));
[["3460", 221, 140], ["2400", 251, 148], ["12552", 311, 153], ["585", 351, 156], ["1466", 391, 161]]
  .forEach(([text, x, y]) => label(document.getElementById("values"), x, y, text, true));

/* Paired bars: intercom runs left from the divider, price runs right */
const pairs = [
  ["Noida", 103, 675, BR], ["New To..", 141, 791, LO], ["Thane ..", 224, 791, TAN], ["Mira R..", 288, 791, LG],
  ["Rajarhat", 321, 717, "#d4a6c8"], ["Khargh..", 329, 791, "#d4a6c8"], ["Ulwe", 335, 782, TAN], ["Tangra", 340, 734, O], ["Dum D..", 374, 707, BR]
];
pairs.forEach(([name, from, to, color], i) => {
  rect(document.getElementById("compare-bars"), from, 23 + i * 20, to - from, 15, color);
  label(document.getElementById("compare-names"), 75, 37 + i * 20, name);
});
```
